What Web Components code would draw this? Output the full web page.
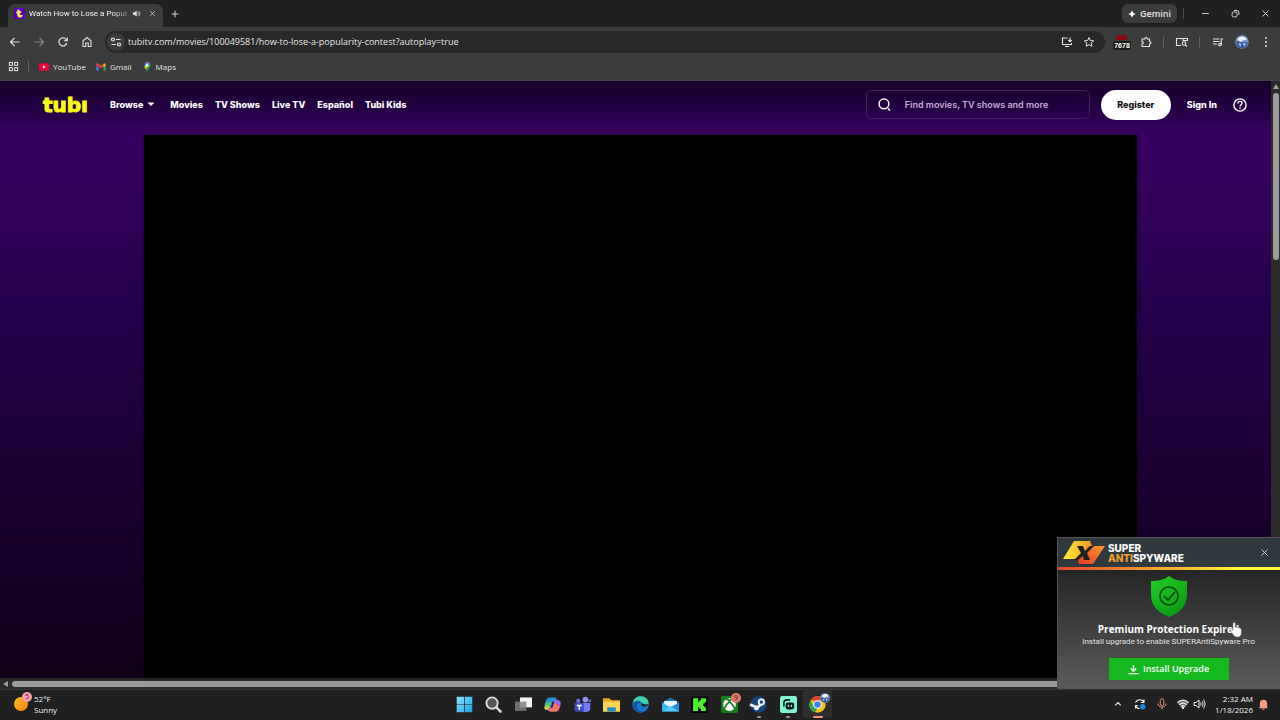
<!DOCTYPE html>
<html lang="en">
<head>
<meta charset="utf-8">
<meta name="viewport" content="width=device-width, initial-scale=1">
<title>Watch How to Lose a Popularity Contest</title>
<style>
  html, body { margin: 0; height: 100%; background: #000; }
  body { font-family: "Open Sans", "Noto Sans", sans-serif; font-size: 9px; line-height: 12px; color: #e3e3e3; overflow: hidden; }
</style>
</head>
<body>
<desktop-shell>
  <tab-strip slot="browser"></tab-strip>
  <browser-toolbar slot="browser"></browser-toolbar>
  <bookmark-bar slot="browser"></bookmark-bar>
  <page-viewport slot="page">
    <tubi-header></tubi-header>
    <video-player></video-player>
  </page-viewport>
  <task-bar slot="taskbar"></task-bar>
  <spyware-toast slot="toast"></spyware-toast>
</desktop-shell>

<script>
const line = (body, w = 2) => `<svg viewBox="0 0 24 24" fill="none" stroke="currentColor" stroke-width="${w}">${body}</svg>`;
const art = (body, box = '0 0 24 24') => `<svg viewBox="${box}">${body}</svg>`;

const ICONS = {
  back: line('<path d="M21 12H4M11 4l-8 8 8 8"/>', 2.2),
  forward: line('<path d="M3 12h17M13 4l8 8-8 8"/>', 2.2),
  reload: line('<path d="M19.5 14A8 8 0 1 1 18 6.8l2 2.2M20.5 3v6.5H14"/>', 2.4),
  home: line('<path d="M4 21V9.5L12 3l8 6.500V21h-5.500v-7h-5v7z"/>', 2.2),
  tune: line('<circle cx="6" cy="7" r="3"/><path d="M12 7h9M3 17h9"/><circle cx="18" cy="17" r="3"/>', 2.4),
  install: line('<path d="M13 4H3v13h18v-3M8 21h8M18 3v8M14.500 8l3.500 3.500L21.500 8"/>', 2.2),
  star: line('<path d="M12 3l2.700 6.100 6.600.6-5 4.400 1.500 6.500L12 17.200 6.200 20.600l1.500-6.500-5-4.400 6.600-.6z"/>'),
  puzzle: line('<path d="M4 6h5.500c-.8-4 5.800-4 5 0H19v5c4-.5 4 5.500 0 5v5H4v-5.500c3.800.5 3.800-5 0-4.500z"/>', 2.2),
  panel: line('<path d="M10 19H1V5h22v5M14 5v4h9"/><circle cx="16" cy="15" r="3.500"/><path d="M18.500 17.500L22 21"/>', 2.2),
  queue: line('<path d="M2 6h13M2 11h13M2 16h8"/><circle cx="16" cy="17" r="2.500"/><path d="M18.500 17V6H22"/>', 2.4),
  dots: art('<g fill="currentColor"><circle cx="12" cy="4" r="2"/><circle cx="12" cy="12" r="2"/><circle cx="12" cy="20" r="2"/></g>'),
  avatar: art('<circle cx="12" cy="12" r="11.500" fill="#7898cf"/><path d="M2 12c2-3 5-2 7 0s7-3 13 1c-1 6-5 10-10 10S2 18 2 12z" fill="#345a9e"/><path d="M4 8c3-7 13-7 16-1-2 4-5 0-7 3s-6 1-9-2z" fill="#eef3ff"/><path d="M6 14l5 1-2 5zM14 13l5 2-4 5z" fill="#b9cff5"/>'),
  close: line('<path d="M4 4l16 16M20 4L4 20"/>', 2.4),
  plus: line('<path d="M12 2v20M2 12h20"/>', 2.8),
  minimize: line('<path d="M3 12h18"/>', 2.4),
  restore: line('<rect x="3" y="8" width="13" height="13" rx="3"/><path d="M8 4h8a5 5 0 0 1 5 5v7"/>', 2.4),
  audio: line('<path d="M3 9v6h4l5 4V5L7 9z" fill="currentColor" stroke-width="1"/><path d="M15 8.500c2 2 2 5 0 7M17.500 5c4 3.500 4 10.500 0 14"/>'),
  spark: art('<path d="M12 0c1.500 7 5 10.500 12 12-7 1.500-10.500 5-12 12-1.500-7-5-10.500-12-12C7 10.500 10.500 7 12 0z" fill="#fff"/>'),
  apps: line('<rect x="3" y="3" width="6.500" height="6.500"/><rect x="14.500" y="3" width="6.500" height="6.500"/><rect x="3" y="14.500" width="6.500" height="6.500"/><rect x="14.500" y="14.500" width="6.500" height="6.500"/>', 2.2),
  favicon: art('<rect width="24" height="24" rx="4" fill="#5b00b8"/><path d="M7 4h5v3h4v4h-3c-1 4 2 6 6 3 0 5-3 7-6 7-5 0-6-4-6-9H5V8h2z" fill="#fff34a"/>'),
  youtube: art('<rect x="0" y="3" width="24" height="18" rx="5" fill="#f5003b"/><path d="M9.500 8l7 4-7 4z" fill="#fff"/>'),
  gmail: art('<path d="M1 6h5v15H2.500L1 19.500z" fill="#4285f4"/><path d="M18 6h5v13.500L21.500 21H18z" fill="#34a853"/><path d="M1 8V5.500C1 3 4 2.500 5.500 4l6.500 5 6.500-5v6L12 15 5.500 10z" fill="#ea4335"/><path d="M18 4.500c2-2 5-1 5 1.500v3l-5 3.500z" fill="#fbbc04"/><path d="M1 6l5 3.500v3L1 9z" fill="#c5221f"/>'),
  maps: art('<path d="M12 0a8 8 0 0 0-6.200 3L12 8z" fill="#ea4335"/><path d="M5.800 3C3 6.500 4 10 5.500 12.500L12 5z" fill="#1a73e8"/><path d="M12 0c6 0 10 6 7 11.500L9 9z" fill="#4fa7f5"/><path d="M19 11.500C16.500 16 13 17 12 24c-1.500-6-5-9-6.500-11.500L17 3c3.500 3 3.500 5.500 2 8.500z" fill="#34a853"/><path d="M5.500 12.500L9 8l6 3-6 6z" fill="#fbbc04"/><circle cx="12" cy="8" r="3" fill="#fff"/>'),
  search: line('<circle cx="11" cy="11" r="9"/><path d="M18.500 19.500L22 23"/>', 2.8),
  help: line('<circle cx="12" cy="12" r="10.500"/><path d="M8.500 9.500c0-5 7-4.500 7-.5 0 2.500-3.500 2.500-3.500 5.500M12 16.200v2.500"/>', 2.3),
  caret: art('<path d="M1 1h14L8 8z" fill="#fff"/>', '0 0 16 9'),
  sun: art('<defs><linearGradient id="s" x1="0" y1="0" x2="1" y2="1"><stop stop-color="#ffc31e"/><stop offset="1" stop-color="#f77e10"/></linearGradient></defs><circle cx="12" cy="12" r="12" fill="url(#s)"/>'),
  windows: art('<defs><linearGradient id="w" x1="0" y1="0" x2="1" y2="1"><stop stop-color="#8ae3fd"/><stop offset="1" stop-color="#1ba0e8"/></linearGradient></defs><path d="M1 1h10.500v10.500H1zM12.500 1H23v10.500H12.500zM1 12.500h10.500V23H1zM12.500 12.500H23V23H12.500z" fill="url(#w)"/>'),
  find: art('<circle cx="10" cy="10" r="8" fill="#555" stroke="#ddd" stroke-width="2.600"/><path d="M16 16l6 6" stroke="#ddd" stroke-width="3.500" stroke-linecap="round"/>'),
  taskview: art('<rect x="7" y="2" width="17" height="14" fill="#f0f0f0"/><rect x="0" y="8" width="16" height="13" fill="#7f7f7f" fill-opacity=".85"/>'),
  copilot: art('<path d="M8 2h7c2 0 3 2 4 5l-6 1-4 12H5c-5 0-5-5-4-8s2-10 7-10z" fill="#2196dc"/><path d="M2 10l8-2-3 10c-5 2-7-2-5-8z" fill="#5cc566"/><path d="M1 15l7-1-2 5c-4 1-6-1-5-4z" fill="#f3c936"/><path d="M16 22H9c-2 0-3-2-3-4l5-1 4-11h4c5 0 5 5 4 8s-2 8-7 8z" fill="#d94cc0"/><path d="M9 22c-2 0-3-2-3-4l5-1 3-7 8 5c-1 5-3 7-6 7z" fill="#f57464"/><path d="M15 6h4c4 0 5 3 4 6l-9-2z" fill="#8d6bf0"/><path d="M11 16l2-8" stroke="#202020" stroke-width="2"/>'),
  teams: art('<circle cx="16" cy="5" r="4" fill="#8f93f5"/><circle cx="6" cy="7" r="3" fill="#6f73df"/><circle cx="22" cy="7" r="2" fill="#5f65d7"/><path d="M8 10h15v8c0 6-12 6-13 1z" fill="#747af0"/><rect x="1" y="10" width="13" height="12" rx="2" fill="#4350c5"/><path d="M4 13.500h7M7.500 13.500v6" stroke="#fff" stroke-width="2"/>'),
  folder: art('<path d="M0 3h9l3 3h12v16H0z" fill="#e8a91f"/><path d="M0 8h24v14H0z" fill="#fcd354"/><path d="M6 22v-6h12v6z" fill="#1f89c6"/>'),
  edge: art('<circle cx="12" cy="12" r="11.500" fill="#1679d1"/><path d="M1 11C2 3 8 0 13 .5c7 .5 11 6 10.500 10C23 15 16 16 14 14c2-4-1-7-5-7s-7 2-8 4z" fill="#42cfab"/><path d="M1 11c2-4 9-6 11-2-5 0-7 7-2 11 3 3 8 2 10 0-6 7-19 3-19-9z" fill="#0c59a4"/><path d="M14 14c-1-1-1-2 0-4 2 2 6 3 9 1-1 5-7 5-9 3z" fill="#202020"/>'),
  mail: art('<path d="M0 9l12-7 12 7v13H0z" fill="#1577bd"/><path d="M3 7h18v9H3z" fill="#e8f7ff"/><path d="M0 9l12 7L0 22z" fill="#36b5ee"/><path d="M24 9l-12 7 12 6z" fill="#238bdc"/><path d="M0 22l12-8 12 8z" fill="#57caff"/>'),
  kick: art('<rect width="24" height="24" fill="#020402"/><path d="M3 3h7v5h2V6h2V3h7v6h-2v2h-2v3h2v2h2v5h-7v-3h-2v-2h-2v5H3z" fill="#48f52d"/>'),
  xbox: art('<rect width="24" height="24" rx="2" fill="#157d18"/><circle cx="12" cy="12" r="9" fill="#fff"/><path d="M7 5c2-.5 4 1 5 2 1-1 3-2.500 5-2M4.500 18c2-5 5-8 7.500-10 2.500 2 5.500 5 7.500 10" fill="none" stroke="#157d18" stroke-width="2.500"/>'),
  steam: art('<circle cx="12" cy="12" r="11.500" fill="#174578"/><path d="M0 12c4 2 8 3 10 5l7-7" fill="none" stroke="#e9eff8" stroke-width="4"/><circle cx="16" cy="8.500" r="5" fill="#f5f8ff"/><circle cx="16" cy="8.500" r="2.500" fill="#174578"/><circle cx="9" cy="17" r="3.500" fill="#e9eff8"/>'),
  streamlabs: art('<rect width="24" height="24" rx="3" fill="#80f5d2"/><path d="M5.500 14V10c0-3 2-4.500 5-4.500h3" fill="none" stroke="#09161d" stroke-width="2.200" stroke-linecap="round"/><rect x="8" y="9" width="12" height="10" rx="3" fill="#09161d"/><path d="M12 12.500v3M16 12.500v3" stroke="#80f5d2" stroke-width="1.800"/>'),
  chrome: art('<circle cx="12" cy="12" r="11.500" fill="#f3c21b"/><path d="M2 6.200A11.500 11.500 0 0 1 22 6.200H12z" fill="#df4033"/><path d="M2 6.200L7 15l5 2.500-3.500 5.500C1 21-2 12.500 2 6.200z" fill="#32a250"/><circle cx="12" cy="12" r="6" fill="#fff"/><circle cx="12" cy="12" r="4.600" fill="#3982ef"/>'),
  chevron: line('<path d="M4 16l8-8 8 8"/>', 3.5),
  sync: line('<path d="M20 9C17 2 7 1 3 9M20 3v6h-6M3 15c1 4 4 6 8 6M3 21v-6h5"/><circle cx="17.500" cy="17.500" r="5.500" fill="#1687dc" stroke="none"/>', 2.2),
  mic: line('<rect x="8.500" y="1.500" width="7" height="14" rx="3.500"/><path d="M4 11c0 10 16 10 16 0M12 19v4"/>'),
  wifi: art('<path d="M0 9a17 17 0 0 1 24 0L12 22z" fill="#777"/><g fill="none" stroke="#eee" stroke-width="2.500"><path d="M1 9c7-6 15-6 22 0M4.500 13.500c4.500-4 10.500-4 15 0M8 17.500c2.500-2 5.500-2 8 0"/></g><circle cx="12" cy="20" r="2" fill="#fff"/>'),
  volume: line('<path d="M2 9v6h4l6 5V4L6 9z"/><path d="M15 9c1.500 2 1.500 4 0 6M18 6c3 4 3 8 0 12M21 3c4 6 4 12 0 18"/>'),
  bell: art('<path d="M4 18V9c0-10 16-10 16 0v9l2 2H2zM9 21h6c0 3-6 3-6 0z" fill="#ff9d83"/>'),
  download: line('<path d="M12 2v14M6 10l6 6 6-6M1 21h22"/>', 3),
  shield: art('<defs><linearGradient id="g" x1="0" y1="0" x2=".6" y2="1"><stop stop-color="#23cf27"/><stop offset="1" stop-color="#0a9b14"/></linearGradient></defs><path d="M18 0c5 4 10 5 18 5v14c0 11-8 18-18 22C8 37 0 30 0 19V5c8 0 13-1 18-5z" fill="url(#g)"/><g fill="none" stroke="#07480b" stroke-width="1.600"><circle cx="18" cy="20" r="9"/><path d="M13 20l4 4 7-8"/></g>', '0 0 36 41'),
  sas: art('<defs><linearGradient id="y" x1="0" y1="0" x2="1" y2="0"><stop stop-color="#fff02f"/><stop offset="1" stop-color="#f29a25"/></linearGradient><linearGradient id="o" x1="0" y1="1" x2="1" y2="0"><stop stop-color="#e63a20"/><stop offset="1" stop-color="#f89a2b"/></linearGradient></defs><path d="M11 0h16l2 5-9 13H0z" fill="url(#y)"/><path d="M24 5h18L30 23H16l-1-5 6-5z" fill="url(#o)"/><path d="M14 5h6l2 5 5-5h4l-7 7 3 7h-6l-1-4-5 4h-4l7-7z" fill="#1d211e"/>', '0 0 42 23'),
  hand: art('<path d="M4 11V2c0-2 3-2 3 0v5c3 0 8 0 8 4v4c0 3-2 5-5 5-4 0-5-2-9-8-1-2 1-3 3-1z" fill="#fff" stroke="#777" stroke-width=".7"/>', '0 0 16 21'),
};

function define(name, css, html) {
  const template = document.createElement('template');
  template.innerHTML = `<style>:host,*{box-sizing:border-box}button{font:inherit;color:inherit;background:none;border:0;padding:0;margin:0}a{color:inherit;text-decoration:none}${css}</style>${html}`;
  customElements.define(name, class extends HTMLElement {
    constructor() {
      super();
      this.attachShadow({ mode: 'open' }).append(template.content.cloneNode(true));
    }
  });
}

customElements.define('ui-icon', class extends HTMLElement {
  constructor() { super(); this.attachShadow({ mode: 'open' }); }
  connectedCallback() {
    this.shadowRoot.innerHTML = `<style>:host{display:inline-block;flex:none;width:var(--size,11px)}svg{display:block;width:100%;overflow:visible}</style>${ICONS[this.getAttribute('name')]}`;
  }
});

define('icon-button', `
  :host { display: flex; flex: none; width: 24px; height: 24px; }
  button { flex: 1; display: flex; align-items: center; justify-content: center; }`,
  '<button type="button"><slot></slot></button>');

define('desktop-shell', `
  :host { display: flex; flex-direction: column; min-height: 100vh; }
  .page { flex: 1; display: flex; min-height: 0; }
  ::slotted(page-viewport) { flex: 1; }`,
  '<slot name="browser"></slot><main class="page"><slot name="page"></slot></main><slot name="taskbar"></slot><slot name="toast"></slot>');

define('tab-strip', `
  :host { display: flex; align-items: center; height: 27px; background: #1f2020; padding: 0 0 0 8px; }
  .tab { align-self: end; display: flex; align-items: center; width: 155px; height: 23px; padding: 0 3px 4px 6px; background: #3c3c3c; border-radius: 7px 7px 0 0; --size: 11px; }
  .title { flex: 1; margin: 0 0 0 4px; white-space: nowrap; font-family: Roboto, sans-serif; font-size: 8px; color: #f1f1f1;
    mask-image: linear-gradient(90deg, #000 84%, #0004); }
  .tab button { width: 16px; display: flex; justify-content: center; --size: 9px; }
  .tab .x { --size: 7px; }
  .new { --size: 8px; }
  .space { flex: 1; }
  .gemini { display: flex; align-items: center; justify-content: center; gap: 4px; width: 55px; height: 19px; border-radius: 6px; background: #3c3c3c; font-weight: 600; --size: 8px; }
  .sep { width: 1px; height: 11px; background: #4a4a4a; margin: 0 6px; }
  .win { width: 30px; --size: 9px; }`,
  `<div class="tab"><ui-icon name="favicon"></ui-icon><span class="title">Watch How to Lose a Popul</span>
   <button aria-label="Mute tab"><ui-icon name="audio"></ui-icon></button><button class="x" aria-label="Close tab"><ui-icon name="close"></ui-icon></button></div>
   <icon-button class="new"><ui-icon name="plus"></ui-icon></icon-button><div class="space"></div>
   <button class="gemini"><ui-icon name="spark"></ui-icon>Gemini</button><div class="sep"></div>
   <icon-button class="win"><ui-icon name="minimize"></ui-icon></icon-button><icon-button class="win"><ui-icon name="restore"></ui-icon></icon-button><icon-button class="win"><ui-icon name="close"></ui-icon></icon-button>`);

define('browser-toolbar', `
  :host { display: flex; align-items: center; height: 30px; padding: 0 2px 0 3px; background: #3c3c3c; --size: 12px; }
  .off { color: #858585; }
  .omni { flex: 1; display: flex; align-items: center; height: 22px; margin: 0 5px 0 6px; padding: 0 5px 0 2px; border-radius: 11px; background: #282828; }
  .tune { width: 18px; height: 18px; border-radius: 9px; background: #3c3c3c; margin-right: 3px; }
  input { flex: 1; min-width: 0; border: 0; padding: 0; background: none; color: #e6e6e6; font: 9px/12px "Open Sans", sans-serif; outline: 0; }
  .omni icon-button { width: 22px; }
  .omni .tune { width: 18px; }
  .sep { width: 1px; height: 11px; background: #606060; margin: 0 6px 0 5px; }
  .ext { display: flex; flex-direction: column; align-items: center; }
  .ext i { width: 11px; height: 5px; border-radius: 3px 3px 0 0; background: #8d0710; }
  .ext b { margin-top: 1px; padding: 0 1px; border-radius: 2px; background: #1c1c1c; color: #fff; font: 700 7px/9px "Liberation Sans", sans-serif; }
  .avatar { --size: 14px; }`,
  `<icon-button><ui-icon name="back"></ui-icon></icon-button><icon-button class="off"><ui-icon name="forward"></ui-icon></icon-button>
   <icon-button><ui-icon name="reload"></ui-icon></icon-button><icon-button><ui-icon name="home"></ui-icon></icon-button>
   <div class="omni"><icon-button class="tune"><ui-icon name="tune"></ui-icon></icon-button>
   <input aria-label="Address" value="tubitv.com/movies/100049581/how-to-lose-a-popularity-contest?autoplay=true">
   <icon-button><ui-icon name="install"></ui-icon></icon-button><icon-button><ui-icon name="star"></ui-icon></icon-button></div>
   <icon-button><span class="ext"><i></i><b>7678</b></span></icon-button><icon-button><ui-icon name="puzzle"></ui-icon></icon-button><div class="sep"></div>
   <icon-button><ui-icon name="panel"></ui-icon></icon-button><div class="sep"></div><icon-button><ui-icon name="queue"></ui-icon></icon-button>
   <icon-button class="avatar"><ui-icon name="avatar"></ui-icon></icon-button><icon-button><ui-icon name="dots"></ui-icon></icon-button>`);

define('bookmark-bar', `
  :host { display: flex; align-items: center; height: 24px; padding: 0 8px 4px; background: #3c3c3c; border-bottom: 1px solid #463f4d; font-size: 8px; }
  .sep { width: 1px; height: 11px; background: #606060; margin: 0 10px 0 9px; }
  nav { display: flex; gap: 10px; }
  a { display: flex; align-items: center; gap: 4px; --size: 10px; }`,
  `<ui-icon name="apps"></ui-icon><div class="sep"></div>
   <nav><a href="#"><ui-icon name="youtube"></ui-icon>YouTube</a><a href="#"><ui-icon name="gmail"></ui-icon>Gmail</a><a href="#"><ui-icon name="maps"></ui-icon>Maps</a></nav>`);

define('page-viewport', `
  :host { display: grid; grid-template: 1fr 11px / 1fr 9px; background: #2b2b2b; min-width: 0; }
  .content { display: flex; flex-direction: column; background: linear-gradient(#16002b 0, #20003f 24px, #370061 52px, #38005f 70px, #280050 200px, #1d0038 360px, #100019 100%); }
  .v { display: flex; flex-direction: column; align-items: center; padding-top: 3px; }
  .v::before { content: ""; border: 3px solid transparent; border-top: 0; border-bottom: 5px solid #9f9f9f; margin-bottom: 4px; }
  .v i { width: 6px; height: 167px; border-radius: 3px; background: #9b9b9b; }
  .h { display: flex; align-items: center; padding-left: 3px; }
  .h::before { content: ""; border: 3px solid transparent; border-left: 0; border-right: 5px solid #9f9f9f; margin-right: 4px; }
  .h i { flex: 1; height: 6px; border-radius: 3px; background: #9b9b9b; }`,
  '<div class="content"><slot></slot></div><div class="v"><i></i></div><div class="h"><i></i></div>');

define('tubi-header', `
  :host { display: flex; align-items: center; height: 47px; padding: 0 24px 0 43px; color: #fff; font: 800 9px/14px Inter, sans-serif; }
  .logo { width: 46px; margin-right: 21px; font: 700 20px/18px "DejaVu Sans", sans-serif; color: #fbfb16; -webkit-text-stroke: 1px #fbfb16; }
  nav { display: flex; align-items: center; gap: 12px; flex: 1; }
  .browse { display: flex; align-items: center; gap: 4px; margin-right: 3px; --size: 8px; }
  .search { display: flex; align-items: center; gap: 14px; width: 224px; height: 29px; padding: 0 11px; border: 1px solid #41205c; border-radius: 5px; --size: 13px; }
  input { flex: 1; min-width: 0; border: 0; padding: 0; background: none; font: 600 9px/14px Inter, sans-serif; outline: 0; }
  input::placeholder { color: #c7acd8; opacity: 1; }
  .reg { width: 70px; height: 30px; margin: 0 16px 0 11px; border-radius: 15px; background: #fff; color: #14101b; }
  .help { margin-left: 16px; --size: 14px; display: flex; }`,
  `<a class="logo" href="#" aria-label="tubi">tubı</a>
   <nav><a class="browse" href="#">Browse<ui-icon name="caret"></ui-icon></a><a href="#">Movies</a><a href="#">TV Shows</a><a href="#">Live TV</a><a href="#">Español</a><a href="#">Tubi Kids</a></nav>
   <label class="search"><ui-icon name="search"></ui-icon><input aria-label="Search" placeholder="Find movies, TV shows and more"></label>
   <button class="reg">Register</button><a href="#">Sign In</a><button class="help" aria-label="Help"><ui-icon name="help"></ui-icon></button>`);

define('video-player', `
  :host { flex: 1; display: block; margin: 7px 134px 0 144px; background: #000; box-shadow: 0 0 3px #0009; }`, '');

define('task-bar', `
  :host { display: grid; grid-template-columns: 1fr auto 1fr; align-items: center; height: 31px; padding-bottom: 2px; background: #202020; border-top: 1px solid #343434; font-size: 8px; line-height: 11px; color: #f2f2f2; }
  .weather { display: flex; align-items: center; gap: 6px; padding-left: 14px; text-align: left; }
  .sun { position: relative; --size: 14px; display: flex; width: 14px; }
  .count { position: absolute; top: -5px; right: -4px; width: 10px; height: 10px; border-radius: 5px; background: #ff9bb0; color: #5b2633; font-size: 7px; line-height: 10px; text-align: center; }
  .apps { display: grid; grid-template-columns: repeat(13, 1fr); width: 383px; margin-left: 2px; height: 28px; --size: 17px; }
  .apps button { position: relative; display: flex; align-items: center; justify-content: center; }
  .apps .run::after { content: ""; position: absolute; bottom: 0; width: 4px; height: 2px; border-radius: 1px; background: #999; }
  .apps .active { background: #2d2d2d; border-radius: 3px; }
  .apps .active::after { width: 10px; background: #f79580; }
  .apps .count { top: 3px; right: 3px; background: #e5796c; color: #3a1410; }
  .apps .face { position: absolute; top: 3px; right: 2px; --size: 10px; }
  .tray { justify-self: end; display: flex; align-items: center; padding-right: 12px; --size: 12px; }
  .tray button { display: flex; justify-content: center; width: 22px; }
  .tray .half { width: 16px; }
  .tray .mic { color: #dd9276; margin-right: 2px; }
  .tray .up { --size: 8px; }
  .tray .clock { display: block; width: auto; margin: 0 5px 0 4px; text-align: right; padding-left: 4px; }
  .tray .bell { width: 10px; --size: 11px; }`,
  `<button class="weather"><span class="sun"><ui-icon name="sun"></ui-icon><span class="count">5</span></span><span>52°F<br>Sunny</span></button>
   <div class="apps">
     <button aria-label="Start"><ui-icon name="windows"></ui-icon></button><button aria-label="Find"><ui-icon name="find"></ui-icon></button><button aria-label="Task view"><ui-icon name="taskview"></ui-icon></button>
     <button aria-label="Copilot"><ui-icon name="copilot"></ui-icon></button><button aria-label="Teams"><ui-icon name="teams"></ui-icon></button><button aria-label="Explorer"><ui-icon name="folder"></ui-icon></button>
     <button aria-label="Edge"><ui-icon name="edge"></ui-icon></button><button aria-label="Mail"><ui-icon name="mail"></ui-icon></button><button aria-label="Kick"><ui-icon name="kick"></ui-icon></button>
     <button aria-label="Xbox"><ui-icon name="xbox"></ui-icon><span class="count">9</span></button><button class="run" aria-label="Steam"><ui-icon name="steam"></ui-icon></button>
     <button class="run" aria-label="Streamlabs"><ui-icon name="streamlabs"></ui-icon></button><button class="run active" aria-label="Chrome"><ui-icon name="chrome"></ui-icon><ui-icon class="face" name="avatar"></ui-icon></button>
   </div>
   <div class="tray"><button class="up" aria-label="Hidden icons"><ui-icon name="chevron"></ui-icon></button><button aria-label="Sync"><ui-icon name="sync"></ui-icon></button>
     <button class="mic" aria-label="Microphone"><ui-icon name="mic"></ui-icon></button><button class="half" aria-label="Network"><ui-icon name="wifi"></ui-icon></button><button class="half" aria-label="Volume"><ui-icon name="volume"></ui-icon></button>
     <button class="clock">2:32 AM<br>1/18/2026</button><button class="bell" aria-label="Notifications"><ui-icon name="bell"></ui-icon></button></div>`);

define('spyware-toast', `
  :host { position: fixed; right: 0; bottom: 31px; width: 223px; background: linear-gradient(#242424 30px, #5a5a5a); border: 1px solid #555; border-right: 0; }
  header { display: flex; align-items: center; gap: 3px; height: 32px; padding: 0 6px 3px 5px; background: linear-gradient(90deg, #e5432c, #f59a2b 40%, #fff23a 80%) bottom / 100% 3px no-repeat #303a3e; }
  .mark { --size: 42px; }
  .brand { flex: 1; color: #fff; font: 800 10px/10px Inter, sans-serif; }
  .brand span { display: block; }
  .brand em { font-style: normal; color: #f5a12d; }
  .x { width: 20px; --size: 9px; }
  .body { display: flex; flex-direction: column; align-items: center; padding: 6px 1px 8px 0; text-align: center; }
  .shield { --size: 36px; }
  h2 { margin: 5px 0 0; color: #fff; font-size: 10px; line-height: 14px; font-weight: 700; }
  p { margin: 0 0 10px; font-family: Roboto, sans-serif; font-size: 8px; line-height: 12px; color: #e4e4e4; }
  .go { display: flex; align-items: center; justify-content: center; gap: 4px; width: 120px; height: 22px; background: #13b91f; color: #fff; font-weight: 600; font-size: 9px; --size: 11px; }
  .hand { position: absolute; right: 38px; top: 84px; --size: 12px; }`,
  `<header><ui-icon class="mark" name="sas"></ui-icon><div class="brand"><span>SUPER</span><span><em>ANTI</em>SPYWARE</span></div><icon-button class="x"><ui-icon name="close"></ui-icon></icon-button></header>
   <div class="body"><ui-icon class="shield" name="shield"></ui-icon><h2>Premium Protection Expired</h2><p>Install upgrade to enable SUPERAntiSpyware Pro</p>
   <button class="go"><ui-icon name="download"></ui-icon>Install Upgrade</button></div><ui-icon class="hand" name="hand"></ui-icon>`);
</script>
</body>
</html>
